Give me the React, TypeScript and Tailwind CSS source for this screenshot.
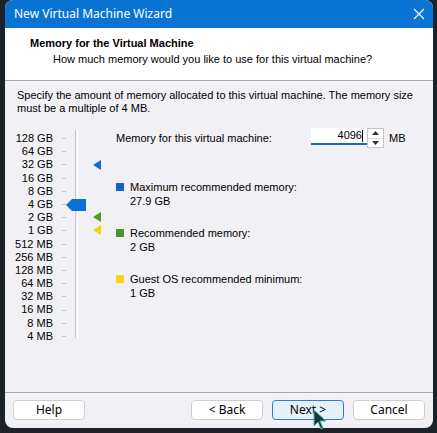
import React from 'react'

const labels = [
  '128 GB', '64 GB', '32 GB', '16 GB', '8 GB', '4 GB', '2 GB', '1 GB',
  '512 MB', '256 MB', '128 MB', '64 MB', '32 MB', '16 MB', '8 MB', '4 MB',
]

const dlg = { fontFamily: '"Liberation Sans", Arial, sans-serif' }
const ui = { fontFamily: '"Noto Sans", "Open Sans", sans-serif' }

function Marker({ color }: { color: string }) {
  return (
    <svg width="8" height="10" viewBox="0 0 8 10">
      <polygon points="0,5 8,0 8,10" fill={color} />
    </svg>
  )
}

function Legend({ color, title, value }: { color: string; title: string; value: string }) {
  return (
    <div className="flex gap-[6px]">
      <div className={`mt-[3px] w-[8px] h-[8px] ${color}`} />
      <div className="leading-[14px]">
        <div>{title}</div>
        <div>{value}</div>
      </div>
    </div>
  )
}

function Button({ children, primary }: { children: React.ReactNode; primary?: boolean }) {
  return (
    <button
      style={ui}
      className={`w-[72px] h-[20px] rounded-[4px] border text-[12px] leading-none text-black ${
        primary ? 'border-[#2f7bd0] bg-[#e6f0fa]' : 'border-[#cfcfcf] bg-white'
      }`}
    >
      {children}
    </button>
  )
}

export default function App() {
  return (
    <div className="w-[437px] h-[433px] bg-[#1d2128] pl-[5px] relative overflow-hidden">
      <div className="w-[428px] h-[428px] rounded-[8px] overflow-hidden flex flex-col bg-[#f1f0f4]">
        {/* Title bar */}
        <div className="h-[28px] shrink-0 bg-[#0a74d4] flex items-center justify-between pl-[9px] pr-[6px] text-white">
          <span style={ui} className="text-[12px]">New Virtual Machine Wizard</span>
          <svg width="12" height="12" viewBox="0 0 12 12" className="mr-[2px]">
            <path d="M1 1 L11 11 M11 1 L1 11" stroke="white" strokeWidth="1.1" />
          </svg>
        </div>

        {/* Header */}
        <div style={dlg} className="h-[53px] shrink-0 bg-white border-b border-[#a9a9a9] pt-[9px] text-[11px] leading-[13px] text-black">
          <div className="pl-[25px] font-bold">Memory for the Virtual Machine</div>
          <div className="pl-[48px] mt-[3px]">How much memory would you like to use for this virtual machine?</div>
        </div>

        {/* Body */}
        <div style={dlg} className="flex-1 flex flex-col text-[11px] text-black">
          <p className="pl-[12px] pt-[8px] leading-[13px] pr-[8px]">
            Specify the amount of memory allocated to this virtual machine. The memory size must be a multiple of 4 MB.
          </p>

          <div className="flex mt-[17px]">
            {/* Slider */}
            <div className="relative flex w-[111px] shrink-0">
              <div className="w-[48px] text-right">
                {labels.map(l => (
                  <div key={l} className="h-[13.2px] leading-[13.2px]">{l}</div>
                ))}
              </div>
              <div className="ml-[9px] w-[4px]">
                {labels.map(l => (
                  <div key={l} className="h-[13.2px] flex items-center">
                    <div className="w-[4px] h-[1px] bg-[#c4c4c4]" />
                  </div>
                ))}
              </div>
              <div className="ml-[9px] -mt-[2px] h-[208px] w-[3px] border-l border-[#c9c9c9] border-r border-r-white" />

              {/* thumb */}
              <svg width="20" height="12" viewBox="0 0 20 12" className="absolute left-[61px] top-[67px]">
                <polygon points="0,6 6,0 20,0 20,12 6,12" fill="#0b6fd6" />
              </svg>
              {/* markers */}
              <div className="absolute left-[88px] top-[28px]"><Marker color="#0b6fd6" /></div>
              <div className="absolute left-[88px] top-[80px]"><Marker color="#4f9a1f" /></div>
              <div className="absolute left-[88px] top-[93px]"><Marker color="#f5d30a" /></div>
            </div>

            {/* Right */}
            <div className="flex-1 -mt-[4px]">
              <div className="flex items-center h-[20px]">
                <span className="w-[195px]">Memory for this virtual machine:</span>
                <div className="w-[56px] h-[17px] bg-white border-b-2 border-[#1a67c0] flex items-center justify-end pr-[4px] self-start">
                  <span>4096</span>
                  <span className="w-[1px] h-[12px] bg-black" />
                </div>
                <div className="w-[17px] h-[20px] border border-[#c6c6c6] bg-white flex flex-col">
                  <div className="flex-1 flex items-center justify-center border-b border-[#dcdcdc]">
                    <svg width="7" height="4" viewBox="0 0 7 4"><polygon points="0,4 3.5,0 7,4" fill="#333" /></svg>
                  </div>
                  <div className="flex-1 flex items-center justify-center">
                    <svg width="7" height="4" viewBox="0 0 7 4"><polygon points="0,0 3.5,4 7,0" fill="#333" /></svg>
                  </div>
                </div>
                <span className="ml-[5px]">MB</span>
              </div>

              <div className="mt-[32px] flex flex-col gap-[18px]">
                <Legend color="bg-[#1466c0]" title="Maximum recommended memory:" value="27.9 GB" />
                <Legend color="bg-[#4c9424]" title="Recommended memory:" value="2 GB" />
                <Legend color="bg-[#fbd40c]" title="Guest OS recommended minimum:" value="1 GB" />
              </div>
            </div>
          </div>

          <div className="flex-1" />

          {/* Footer */}
          <div className="border-t border-[#a9a9a9] h-[36px] shrink-0 flex items-center px-[8px] pb-[2px]">
            <Button>Help</Button>
            <div className="flex-1" />
            <div className="flex gap-[9px]">
              <Button>&lt; Back</Button>
              <Button primary>Next &gt;</Button>
              <Button>Cancel</Button>
            </div>
          </div>
        </div>
      </div>

      {/* mouse pointer */}
      <svg width="16" height="22" viewBox="0 0 16 22" className="absolute left-[312px] top-[409px]">
        <path d="M2 1 L2 17 L6 13 L9 20 L11 19 L8 12 L14 12 Z" fill="#123a3c" stroke="#4fb6b0" strokeWidth="1" />
      </svg>
    </div>
  )
}
